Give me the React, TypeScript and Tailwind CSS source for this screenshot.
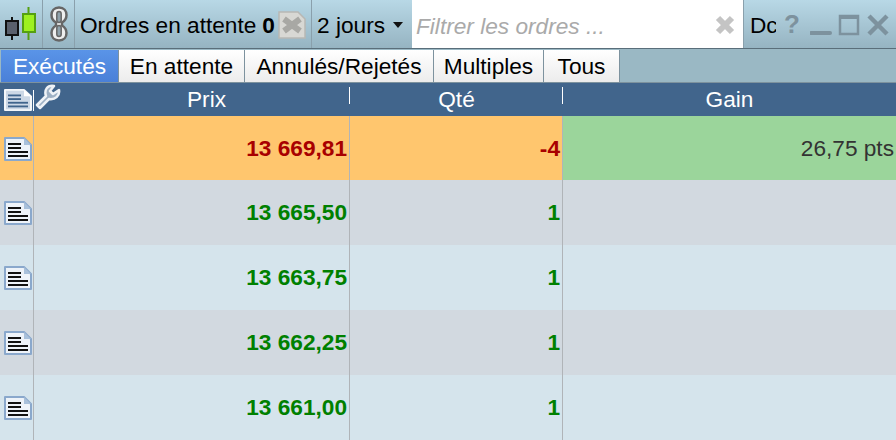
import React from "react";

const DocIcon = ({ header }: { header?: boolean }) => (
  <svg width="28" height={header ? 22 : 24} viewBox="0 0 28 24" preserveAspectRatio="none" className="block">
    <path d="M1 1H20L27 8V23H1Z" fill={header ? "#ccd8e6" : "#eef3f9"} stroke={header ? "#f4f7fa" : "#8aa8cc"} strokeWidth="2" strokeLinejoin="round" />
    <path d="M20 1V8H27Z" fill={header ? "#ffffff" : "#a9c0da"} />
    {[7, 11, 15, 19].map((y, i) => (
      <rect key={y} x="4" y={y - 1} width={i < 2 ? 13 : 20} height="2" fill={header ? "#3f648c" : "#111"} />
    ))}
  </svg>
);

const Row = ({ h, bg, color, prix, qte, gain }: { h: string; bg: string; color: string; prix: string; qte: string; gain?: boolean }) => (
  <div className={`flex ${h} shrink-0 font-bold text-[22.67px]`} style={{ background: bg }}>
    <div className="w-[34px] shrink-0 border-r border-[#b0b4b8] flex items-center pl-[4px] pt-[1px]"><DocIcon /></div>
    <div className="w-[316px] shrink-0 border-r border-[#b0b4b8] flex items-center justify-end pr-[2px] pb-[1px]" style={{ color }}>{prix}</div>
    <div className="w-[213px] shrink-0 border-r border-[#b0b4b8] flex items-center justify-end pr-[2px] pb-[1px]" style={{ color }}>{qte}</div>
    <div className={`flex-1 flex items-center justify-end pr-[2px] pb-[1px] font-normal text-[#333] ${gain ? "bg-[#9bd59b]" : ""}`}>{gain ? "26,75 pts" : ""}</div>
  </div>
);

const Tab = ({ label, active, w }: { label: string; active?: boolean; w: string }) => (
  <div className={`${w} h-[32px] shrink-0 flex items-center justify-center border-r border-[#7d929e] ${active ? "bg-gradient-to-b from-[#5a94e8] to-[#4a80d8] text-white" : "bg-gradient-to-b from-white to-[#ececec] text-black"}`}>{label}</div>
);

export default function App() {
  return (
    <div className="w-[896px] h-[440px] overflow-hidden flex flex-col bg-[#d5e4ec] text-[22.67px] text-black" style={{ fontFamily: '"Liberation Sans", Arial, sans-serif' }}>
      <div className="h-[48px] shrink-0 flex bg-gradient-to-b from-[#b8d8e6] to-[#96b4c2]">
        <div className="w-[43px] shrink-0 border-r border-[#8aa0ac] flex items-center pl-[4px]">
          <svg width="33" height="36" viewBox="0 0 33 36">
            <path d="M8 11V34" stroke="#111" strokeWidth="2" />
            <rect x="2" y="15" width="12" height="14" fill="#5a606c" stroke="#111" strokeWidth="2" />
            <path d="M24.5 1V34" stroke="#55a010" strokeWidth="2" />
            <rect x="19" y="8" width="12" height="18" fill="#9ef020" stroke="#55a010" strokeWidth="2" />
          </svg>
        </div>
        <div className="w-[32px] shrink-0 border-r border-[#8aa0ac] flex items-center justify-center">
          <svg width="20" height="38" viewBox="0 0 20 38" fill="none">
            <path d="M10 2.5C5 2.5 2.5 6 2.5 10C2.5 13.5 4.5 16 7 17.5V20.5C4.5 22 2.5 24.5 2.5 28C2.5 32 5 35.5 10 35.5C15 35.5 17.5 32 17.5 28C17.5 24.5 15.5 22 13 20.5V17.5C15.5 16 17.5 13.5 17.5 10C17.5 6 15 2.5 10 2.5Z" fill="#eeeeee" stroke="#666" strokeWidth="2.5" />
            <path d="M10 6.5C8.5 6.5 7.8 7.8 7.8 9V15C7.8 16.5 8.5 17.5 10 17.5C11.5 17.5 12.2 16.5 12.2 15V9C12.2 7.8 11.5 6.5 10 6.5Z" fill="#8fa2ac" stroke="#666" strokeWidth="1.5" />
            <path d="M10 20.5C8.5 20.5 7.8 21.5 7.8 23V29C7.8 30.2 8.5 31.5 10 31.5C11.5 31.5 12.2 30.2 12.2 29V23C12.2 21.5 11.5 20.5 10 20.5Z" fill="#8fa2ac" stroke="#666" strokeWidth="1.5" />
          </svg>
        </div>
        <div className="w-[237px] shrink-0 border-r border-[#8aa0ac] flex items-center pl-[5px] pt-[1px]">
          <span>Ordres en attente</span>
          <span className="font-bold ml-[6px]">0</span>
          <svg width="28" height="28" viewBox="0 0 28 28" className="ml-[3px]">
            <path d="M1 1H20L27 8V27H1Z" fill="#d8d8d4" stroke="#b8b8b4" strokeWidth="1.5" />
            <path d="M6 8L22 20M22 8L6 20" stroke="#a8a8a4" strokeWidth="6" />
          </svg>
        </div>
        <div className="w-[100px] shrink-0 flex items-center pl-[5px] pt-[1px]">
          <span>2 jours</span>
          <svg width="10" height="6" viewBox="0 0 10 6" className="ml-[8px]"><path d="M0 0H10L5 6Z" fill="#111" /></svg>
        </div>
        <div className="w-[331px] shrink-0 bg-white flex items-center pl-[4px] pt-[3px] relative">
          <span className="italic text-[#aaa]">Filtrer les ordres ...</span>
          <svg width="22" height="22" viewBox="0 0 22 22" className="absolute right-[7px] top-[14px]">
            <path d="M4 4L18 18M18 4L4 18" stroke="#c4c4c4" strokeWidth="6" />
          </svg>
        </div>
        <div className="flex-1 border-l border-[#8aa0ac] flex items-center pl-[6px]">
          <span className="w-[26px] overflow-hidden shrink-0 whitespace-nowrap pt-[1px]">Dc</span>
          <span className="ml-[8px] w-[18px] font-bold text-[26px] text-[#7d929e] leading-none">?</span>
          <svg width="80" height="24" viewBox="0 0 80 24" className="ml-[8px] mt-[2px]" fill="none" stroke="#7d929e">
            <path d="M1 20H20" strokeWidth="4" strokeLinecap="round" />
            <rect x="30" y="3" width="18" height="18" strokeWidth="2.5" />
            <path d="M30 4H48" strokeWidth="4" />
            <path d="M59 3L77 21M77 3L59 21" strokeWidth="4.5" />
          </svg>
        </div>
      </div>
      <div className="h-[34px] shrink-0 flex bg-[#9ab8c4] border-t border-[#5a6e7a] pt-[1px] pl-[1px]">
        <Tab label="Exécutés" active w="w-[118px]" />
        <Tab label="En attente" w="w-[126px]" />
        <Tab label="Annulés/Rejetés" w="w-[189px]" />
        <Tab label="Multiples" w="w-[110px]" />
        <Tab label="Tous" w="w-[76px]" />
      </div>
      <div className="h-[34px] shrink-0 flex items-center bg-[#41658c] border-t border-[#7d929e] text-white">
        <div className="w-[34px] shrink-0 flex items-center pl-[4px] relative">
          <DocIcon header />
          <div className="absolute right-0 top-[1px] h-[21px] w-px bg-white" />
        </div>
        <div className="w-[316px] shrink-0 flex justify-center relative pl-[29px] pb-[1px]">
          <svg width="26" height="26" viewBox="0 0 26 26" className="absolute left-[1px] top-[2px]" fill="none">
            <path d="M2 21L11 12C9 6 12 1 19 2L15 7L18 10L24 6C25 12 20 16 14 15L5 24Z" fill="#9db0c4" stroke="#eef2f6" strokeWidth="2.5" strokeLinejoin="round" />
          </svg>
          Prix
          <div className="absolute right-0 top-[5px] h-[17px] w-px bg-white" />
        </div>
        <div className="w-[213px] shrink-0 flex justify-center relative pb-[1px]">
          Qté
          <div className="absolute right-0 top-[5px] h-[17px] w-px bg-white" />
        </div>
        <div className="flex-1 flex justify-center pb-[1px]">Gain</div>
      </div>
      <Row h="h-[64px]" bg="#ffc66e" color="#a80000" prix="13 669,81" qte="-4" gain />
      <Row h="h-[65px]" bg="#d2d9e0" color="#008000" prix="13 665,50" qte="1" />
      <Row h="h-[65px]" bg="#d5e4ec" color="#008000" prix="13 663,75" qte="1" />
      <Row h="h-[65px]" bg="#d2d9e0" color="#008000" prix="13 662,25" qte="1" />
      <Row h="h-[65px]" bg="#d5e4ec" color="#008000" prix="13 661,00" qte="1" />
    </div>
  );
}
